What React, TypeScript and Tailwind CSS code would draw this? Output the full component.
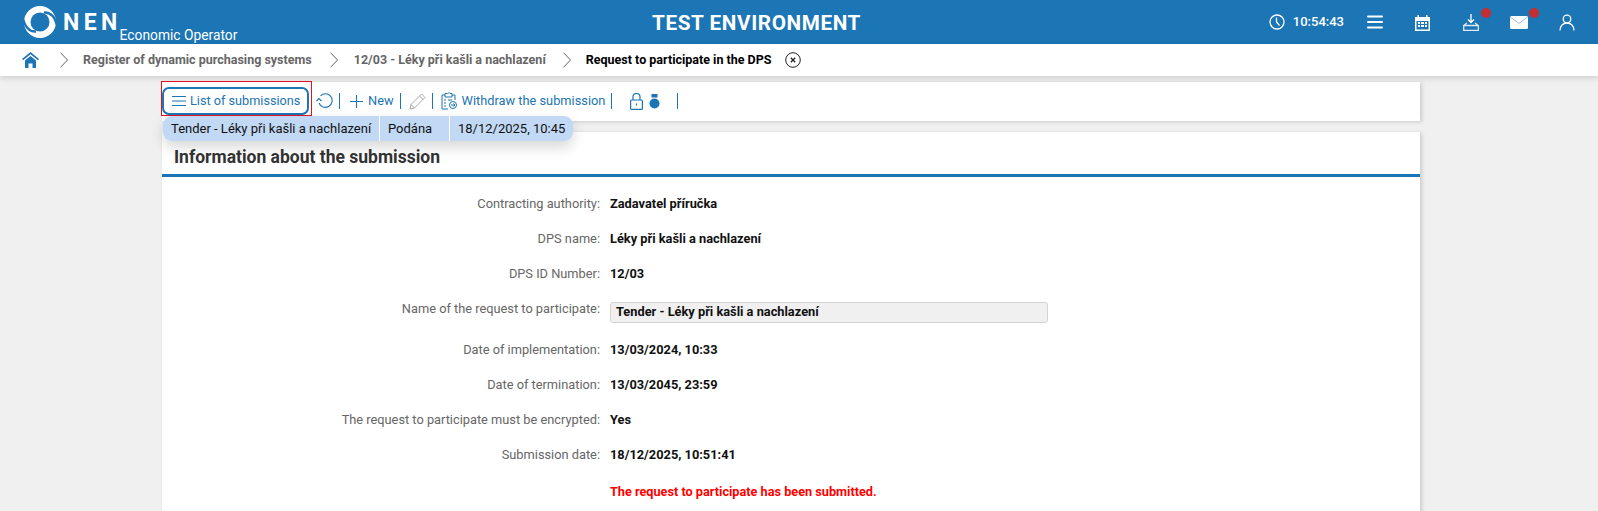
const rows = [
  { label: "Contracting authority:", value: "Zadavatel příručka" },
  { label: "DPS name:", value: "Léky při kašli a nachlazení" },
  { label: "DPS ID Number:", value: "12/03" },
];

const rowsAfter = [
  { label: "Date of implementation:", value: "13/03/2024, 10:33" },
  { label: "Date of termination:", value: "13/03/2045, 23:59" },
  { label: "The request to participate must be encrypted:", value: "Yes" },
  { label: "Submission date:", value: "18/12/2025, 10:51:41" },
];

function Logo() {
  return (
    <svg width="32" height="32" viewBox="0 0 32 32">
      <circle cx="16" cy="16" r="16" fill="#fff" />
      <circle cx="16" cy="16" r="9.500" fill="#1c75b4" />
      <path d="M20 6.500C26 6 30.500 10 33 19" fill="none" stroke="#1c75b4" strokeWidth="2.400" />
      <path d="M12 25.500C6 26 1.500 22-1 13" fill="none" stroke="#1c75b4" strokeWidth="2.400" />
    </svg>
  );
}

function Chevron() {
  return (
    <svg width="8" height="16" viewBox="0 0 8 16" fill="none" stroke="#666666" strokeWidth="1">
      <path d="M.5.7 7.500 8 .5 15.300" />
    </svg>
  );
}

function Sep() {
  return <span className="mx-[6px] h-[16px] w-[1px] bg-[#1c75b4]" />;
}

function Row({ label, value }: { label: string; value: string }) {
  return (
    <div className="flex h-[35px] items-center">
      <div className="w-[438px] text-right text-[#666666]">{label}</div>
      <div className="ml-[10px] font-bold text-[#111111]">{value}</div>
    </div>
  );
}

export default function App() {
  return (
    <div className="relative h-[511px] overflow-hidden bg-[#f0f0f0] font-['Roboto',sans-serif] text-[12.800px]">
      {/* header */}
      <header className="relative flex h-[44px] items-center bg-[#1c75b4] text-white">
        <div className="flex items-center pl-[24px]">
          <Logo />
          <span className="ml-[7px] mt-[1px] text-[23px] leading-none font-bold tracking-[4.400px]">NEN</span>
          <span className="mt-[27px] ml-[-2px] text-[13.800px] leading-none">Economic Operator</span>
        </div>
        <div className="absolute left-[652px] top-[8px] text-[20.700px] font-bold tracking-[0.6px]">TEST ENVIRONMENT</div>
        <div className="ml-auto flex items-center pr-[23px]">
          <svg width="16" height="16" viewBox="0 0 16 16" fill="none" stroke="#fff" strokeWidth="1.300">
            <circle cx="8" cy="8" r="7" />
            <path d="M7.500 3.500V8l3 3.500" />
          </svg>
          <span className="ml-[8px] text-[13px] font-medium">10:54:43</span>
          <svg className="ml-[23px]" width="16" height="14" viewBox="0 0 16 14" fill="none" stroke="#fff" strokeWidth="2" strokeLinecap="round">
            <path d="M1 1.500h14M1 7h14M1 12.500h14" />
          </svg>
          <svg className="ml-[31px]" width="17" height="17" viewBox="0 0 17 17" fill="#fff">
            <path d="M1 3h2.500V1h1.500v2h7V1h1.500v2H16v14H1Zm1.500 4v8.500h12V7Z" />
            <path d="M4 8h2v2H4Zm3 0h3v2H7Zm4 0h2v2h-2ZM4 11h2v2H4Zm3 0h3v2H7Zm4 0h2v2h-2Z" />
          </svg>
          <div className="relative ml-[32px]">
            <svg className="block" width="16" height="17" viewBox="0 0 16 17" fill="none" stroke="#fff" strokeWidth="1.300">
              <path d="M8 0v8M5 5.500 8 8.500l3-3" />
              <path d="M4 9 .7 11.500v4.800h14.600v-4.800L12 9 M1 11.500h14" strokeOpacity=".85" />
            </svg>
            <span className="absolute left-[18px] top-[-6px] h-[10px] w-[10px] rounded-full bg-[#c62f2f]" />
          </div>
          <div className="relative ml-[31px]">
            <svg className="block" width="18" height="13" viewBox="0 0 18 13">
              <rect width="18" height="13" rx="1.500" fill="#fff" />
              <path d="M.5 1 9 7.500 17.500 1" fill="none" stroke="#9cc3e0" strokeWidth="1" />
            </svg>
            <span className="absolute left-[19px] top-[-8px] h-[10px] w-[10px] rounded-full bg-[#c62f2f]" />
          </div>
          <svg className="ml-[31px]" width="16" height="17" viewBox="0 0 16 17" fill="none" stroke="#fff" strokeWidth="1.300">
            <circle cx="8" cy="5" r="3.800" />
            <path d="M1 16.500c0-4.500 3-7.500 7-7.500s7 3 7 7.500" />
          </svg>
        </div>
      </header>

      {/* breadcrumb */}
      <nav className="relative z-10 flex h-[32px] items-center bg-white pl-[22px] text-[12.500px] shadow-[0_2px_6px_rgba(0,0,0,0.15)]">
        <svg width="17" height="16" viewBox="0 0 17 16" fill="#1c75b4">
          <path d="M8.500 0 17 7l-1 1.300L8.500 2.200 1 8.300 0 7Z" />
          <path d="M3 8.500 8.500 4 14 8.500V16h-3.500v-4.500h-4V16H3Z" />
        </svg>
        <span className="ml-[21px] flex"><Chevron /></span>
        <span className="ml-[15px] font-bold text-[#666666]">Register of dynamic purchasing systems</span>
        <span className="ml-[18px] flex"><Chevron /></span>
        <span className="ml-[16px] font-bold text-[#666666]">12/03 - Léky při kašli a nachlazení</span>
        <span className="ml-[17px] flex"><Chevron /></span>
        <span className="ml-[15px] font-bold text-black">Request to participate in the DPS</span>
        <svg className="ml-[13px]" width="16" height="16" viewBox="0 0 16 16" fill="none" stroke="#222" strokeWidth="1">
          <circle cx="8" cy="8" r="7.300" />
          <path d="M5.800 5.800l4.400 4.400M10.200 5.800l-4.400 4.400" strokeWidth="1.300" />
        </svg>
      </nav>

      <main className="mx-[162px] mt-[6px] w-[1258px]">
        {/* toolbar */}
        <div className="flex h-[39px] items-center bg-white pb-[1px] text-[#1c75b4] shadow-[2px_1px_4px_rgba(0,0,0,0.15)]">
          <button className="flex h-[28px] w-[147px] items-center rounded-[7px] border-2 border-[#1c75b4] pl-[7px] text-[12.700px]">
            <svg width="16" height="12" viewBox="0 0 16 12" fill="none" stroke="#1c75b4" strokeWidth="1">
              <path d="M1 1.500h14M1 6h14M1 10.500h14" />
            </svg>
            <span className="ml-[3px]">List of submissions</span>
          </button>
          <svg className="ml-[7px]" width="17" height="16" viewBox="0 0 17 16" fill="none" stroke="#1c75b4" strokeWidth="1.100">
            <path d="M4.500 2.800A6.800 6.800 0 1 1 3 10" />
            <path d="M0.500 8 3 5.500 5.500 8" />
          </svg>
          <Sep />
          <svg className="ml-[4px]" width="13" height="13" viewBox="0 0 13 13" fill="none" stroke="#1c75b4" strokeWidth="1.100">
            <path d="M6.500 0v13M0 6.500h13" />
          </svg>
          <span className="ml-[5px]">New</span>
          <Sep />
          <svg className="ml-[2px]" width="17" height="17" viewBox="0 0 17 17" fill="none" stroke="#aaaaaa" strokeWidth="1">
            <path d="M1 16 2 11.500 12.500 1 16 4.500 5.500 15Z M10.500 3 14 6.500 M2 11.500 5.500 15" />
          </svg>
          <Sep />
          <svg className="ml-[2px]" width="16" height="18" viewBox="0 0 16 18" fill="none" stroke="#1c75b4" strokeWidth="1">
            <path d="M4 3H1v14h6M11 3h3v5M4 1.500h2.500a1.500 1.500 0 0 1 2.500 0H11V5H4Z" />
            <path d="M3 8h2M3 11h2M3 14h2M7 8h4" />
            <circle cx="12" cy="13" r="3.500" />
            <path d="M10 13h4M12.500 11.500 14 13l-1.500 1.500" />
          </svg>
          <span className="ml-[5px]">Withdraw the submission</span>
          <Sep />
          <svg className="ml-[12px]" width="13" height="17" viewBox="0 0 13 17" fill="none" stroke="#1c75b4" strokeWidth="1.200">
            <rect x=".6" y="7" width="11.800" height="9.400" rx="1" />
            <path d="M3 7V4a3.500 3.500 0 0 1 7 0v3M6.500 10.500v2" />
          </svg>
          <svg className="ml-[6px]" width="11" height="15" viewBox="0 0 11 15" fill="#1c75b4">
            <path d="M2.500 0h6v3.500h-6Z" />
            <circle cx="5.500" cy="9.500" r="5" />
          </svg>
          <span className="ml-[17px] h-[16px] w-[1px] bg-[#1c75b4]" />
        </div>

        {/* form card */}
        <section className="mt-[11px] bg-white pb-[40px] shadow-[2px_1px_4px_rgba(0,0,0,0.15)]">
          <div className="flex h-[45px] items-center border-b-[3px] border-[#1c75b4] pt-[9px] pl-[12px] text-[17.500px] font-bold text-[#333333]">
            Information about the submission
          </div>
          <div className="pt-[9px]">
            {rows.map((r) => (
              <Row key={r.label} label={r.label} value={r.value} />
            ))}
            <div className="flex h-[41px] items-center pt-[1px]">
              <div className="mb-[6px] w-[438px] text-right text-[#666666]">Name of the request to participate:</div>
              <div className="ml-[10px] flex h-[21px] w-[438px] items-center rounded-[3px] border border-[#d4d4d4] bg-[#f0f0f0] pl-[5px] font-bold text-[#111111]">
                Tender - Léky při kašli a nachlazení
              </div>
            </div>
            {rowsAfter.map((r) => (
              <Row key={r.label} label={r.label} value={r.value} />
            ))}
            <div className="mt-[2px] flex h-[35px] items-center pl-[448px] text-[12.700px] font-bold text-[#ff0000]">
              The request to participate has been submitted.
            </div>
          </div>
        </section>
      </main>

      {/* focus outline */}
      <div className="absolute left-[161px] top-[81px] h-[35px] w-[151px] border border-[#e8111f]" />

      {/* submissions dropdown */}
      <div className="absolute left-[163px] top-[116px] z-20 flex h-[25px] items-center overflow-hidden rounded-[9px] bg-[#c1d9f4] text-[13px] text-[#111111] shadow-[0_6px_14px_rgba(0,0,0,0.16)]">
        <div className="flex h-full w-[217px] items-center border-r border-white pl-[8px]">Tender - Léky při kašli a nachlazení</div>
        <div className="flex h-full w-[70px] items-center border-r border-white pl-[8px]">Podána</div>
        <div className="flex h-full w-[123px] items-center pl-[8px]">18/12/2025, 10:45</div>
      </div>
    </div>
  );
}
